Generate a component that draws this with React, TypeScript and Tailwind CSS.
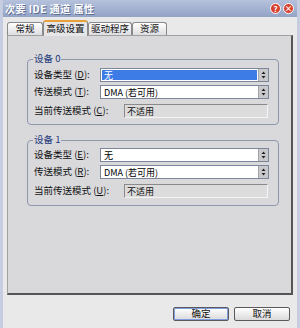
import React from "react"

const font = { fontFamily: '"SimSun", "Noto Sans CJK SC", sans-serif' }

function Arrow() {
  return (
    <div className="w-[10px] h-full bg-[#c9c9cc] border-l border-[#a0a4ae] flex items-center justify-center">
      <svg width="5" height="8" viewBox="0 0 5 8">
        <path d="M2.5 0.5 L4.5 3 L0.5 3 Z" fill="#222" />
        <path d="M2.5 7.5 L4.5 5 L0.5 5 Z" fill="#222" />
      </svg>
    </div>
  )
}

function Select({ value, selected }: { value: string; selected?: boolean }) {
  return (
    <div className="w-[169px] h-[14px] border border-[#7c879c] bg-white flex">
      <div className="flex-1 p-[1px]">
        <div
          className={
            "h-full flex items-center pl-[2px] text-[9px] leading-none " +
            (selected ? "bg-[#3d7be6] text-white" : "text-black")
          }
        >
          {value}
        </div>
      </div>
      <Arrow />
    </div>
  )
}

function Label({ text, k }: { text: string; k: string }) {
  return (
    <span className="text-[9.5px] leading-none text-[#111] whitespace-nowrap">
      {text} (<span className="underline">{k}</span>):
    </span>
  )
}

function Group({ title, keys, top }: { title: string; keys: string[]; top: string }) {
  return (
    <div className={"relative w-[252px] h-[66px] border border-[#8d98ae] rounded-[4px] pl-[6px] pr-[9px] " + top}>
      <span className="absolute -top-[6px] left-[5px] px-[1px] bg-[#d9d9dc] text-[9.5px] leading-none text-[#1f3a7a]">
        {title}
      </span>
      <div className="flex flex-col">
        <div className="flex items-center justify-between h-[14px]">
          <Label text="设备类型" k={keys[0]} />
          <Select value="无" selected={keys[0] === "D"} />
        </div>
        <div className="flex items-center justify-between h-[14px] mt-[3px]">
          <Label text="传送模式" k={keys[1]} />
          <Select value="DMA (若可用)" />
        </div>
        <div className="flex items-center justify-between h-[14px] mt-[5px]">
          <Label text="当前传送模式" k={keys[2]} />
          <div className="w-[144px] h-[14px] mr-[1px] bg-[#dcdcdc] border border-t-[#8a8a8a] border-l-[#8a8a8a] border-r-[#f4f4f4] border-b-[#f4f4f4] flex items-center pl-[2px] text-[9px] leading-none text-[#111]">
            不适用
          </div>
        </div>
      </div>
    </div>
  )
}

function Tab({ label, w, active }: { label: string; w: string; active?: boolean }) {
  return (
    <div
      className={
        "flex items-center justify-center text-[9.5px] leading-none text-[#111] border border-[#8a8a8a] border-b-0 rounded-t-[3px] " +
        w +
        (active
          ? " h-[16px] bg-[#e6e6e8] border-t-2 border-t-[#e8a23a] -mb-[1px] z-10"
          : " h-[13px] bg-gradient-to-b from-white to-[#dedee2]")
      }
    >
      {label}
    </div>
  )
}

function Btn({ label, def }: { label: string; def?: boolean }) {
  return (
    <div
      className={
        "w-[56px] h-[14px] rounded-[2px] border border-[#5a5a5a] bg-gradient-to-b from-white to-[#dadada] flex items-center justify-center text-[9.5px] leading-none text-[#111] " +
        (def ? "shadow-[inset_0_0_0_1px_#7f9de0]" : "")
      }
    >
      {label}
    </div>
  )
}

export default function App() {
  return (
    <div style={font} className="w-[300px] h-[328px] bg-[#e9e9e9] flex flex-col overflow-hidden border-l-[3px] border-r-[3px] border-[#c6cde0]">
      <div className="h-[17px] -mx-[3px] bg-gradient-to-b from-[#b6c2dc] to-[#93a3c6] flex items-center justify-between pl-[5px] pr-[6px]">
        <span className="text-[10px] font-bold leading-none tracking-[0.5px] text-white [text-shadow:1px_1px_0_#5d6d92]">次要 IDE 通道 属性</span>
        <div className="flex gap-[2px]">
          <div className="w-[11px] h-[11px] rounded-full bg-[#d6402e] border border-white flex items-center justify-center text-[8px] font-bold leading-none text-white">?</div>
          <div className="w-[11px] h-[11px] rounded-full bg-[#d6402e] border border-white flex items-center justify-center text-[8px] font-bold leading-none text-white">×</div>
        </div>
      </div>
      <div className="flex-1 flex flex-col px-[4px] pt-[3px]">
        <div className="flex items-end h-[15px]">
          <Tab label="常规" w="w-[36px]" />
          <Tab label="高级设置" w="w-[45px]" active />
          <Tab label="驱动程序" w="w-[44px]" />
          <Tab label="资源" w="w-[35px]" />
        </div>
        <div className="w-[286px] h-[260px] bg-[#d9d9dc] border border-[#a0a0a0] border-r-2 border-b-2 border-r-[#555] border-b-[#555] flex flex-col items-start pl-[19px] pt-[23px]">
          <Group title="设备 0" keys={["D", "T", "C"]} top="pt-[8px]" />
          <div className="h-[15px]" />
          <Group title="设备 1" keys={["E", "R", "U"]} top="pt-[7px]" />
        </div>
        <div className="flex justify-end gap-[5px] mt-[12px] pr-[3px]">
          <Btn label="确定" def />
          <Btn label="取消" />
        </div>
      </div>
    </div>
  )
}
